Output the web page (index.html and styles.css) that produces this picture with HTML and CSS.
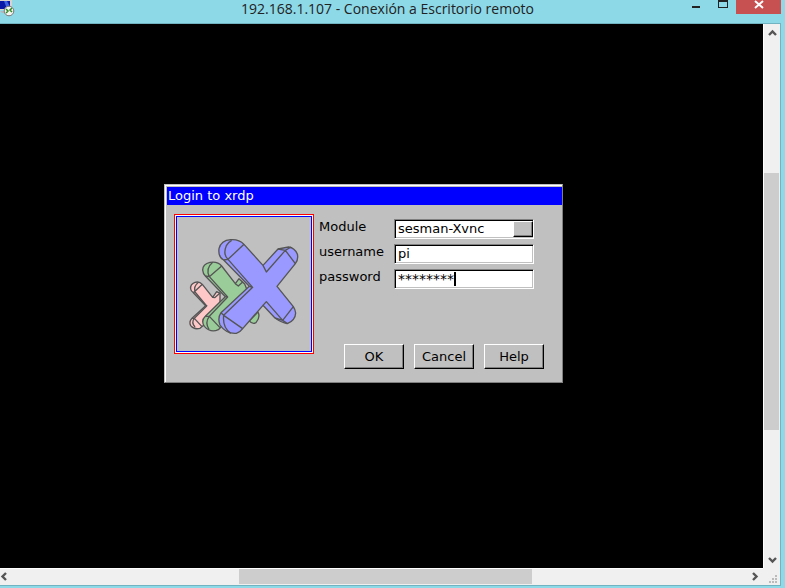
FILE: index.html
```
<!DOCTYPE html>
<html lang="es">
<head>
<meta charset="utf-8">
<title>192.168.1.107 - Conexión a Escritorio remoto</title>
<link rel="stylesheet" href="styles.css">
</head>
<body>
<header class="titlebar">
  <svg class="app-icon" width="16" height="17" viewBox="0 0 16 17" aria-hidden="true">
    <path d="M0 0h12v10H0z" fill="#d8d4cc"/>
    <path d="M0 1h10v8H0z" fill="#0a18a8"/>
    <path d="M4 1h3l3 6V9H7z" fill="#3d63e0"/>
    <path d="M0 11h6v2H2z" fill="#b4b8bc"/>
    <circle cx="9" cy="11" r="4.800" fill="#f4f4f0" stroke="#777"/>
    <path d="M6 9l2 2-2 2M12 8l-2 2 2 2" fill="none" stroke="#2c8a22" stroke-width="1.500"/>
  </svg>
  <h1 class="caption">192.168.1.107 - Conexión a Escritorio remoto</h1>
  <div class="window-buttons">
    <button class="win-btn" type="button" aria-label="Minimizar"><svg width="27" height="14" viewBox="0 0 27 14"><path d="M10 6h8v2h-8z" fill="#222"/></svg></button>
    <button class="win-btn" type="button" aria-label="Maximizar"><svg width="27" height="14" viewBox="0 0 27 14"><path d="M9 0h10v8H9zM10 2v5h8V2z" fill="#222" fill-rule="evenodd"/></svg></button>
    <button class="win-btn win-close" type="button" aria-label="Cerrar"><svg width="45" height="14" viewBox="0 0 45 14"><path d="M19 1l8 7M27 1l-8 7" stroke="#fff" stroke-width="2"/></svg></button>
  </div>
</header>
<div class="client">
  <main class="desktop">
    <form class="dialog">
      <h2 class="dialog-title">Login to xrdp</h2>
      <div class="dialog-body">
        <div class="logo">
          <svg width="134" height="134" viewBox="21 21 402 402" role="img" aria-label="xrdp">
            <g stroke="#555" stroke-width="4" stroke-linejoin="round">
              <g fill="#ffc8c8">
                <path d="M75 217Q60 222 62 237Q63 244 70 248L107 287L66 325Q56 335 62 347Q72 360 90 355L150 305V250L140 245L128 262L97 223Q88 213 75 217z"/>
                <path d="M70 248L97 223M75 246Q70 229 84 218M75 246L110 288L73 325L96 350M107 287h5M73 325Q63 337 75 351M66 325h7M128 262L134 263L151 248" fill="none"/>
              </g>
              <g fill="#99cc99">
                <path d="M120 157Q98 162 98 180Q99 192 106 198L166 260L106 319Q92 332 103 349Q122 370 145 359L240 262L224 222L207 206L196 221L155 168Q143 153 120 157zM237 332Q247 344 258 338Q272 321 264 306L240 330z"/>
                <path d="M106 198L118 200L155 168M118 200Q106 176 128 157M118 200L173 261L118 319L150 353M166 260h7M118 319Q104 337 117 358M106 319h12M196 221L205 228L218 216" fill="none"/>
              </g>
              <g fill="#9999ff">
                <path d="M182 89Q153 91 147 116Q144 141 161 150L238 229L153 308Q142 324 150 345Q168 372 199 370Q211 366 218 356L279 286L315 324Q335 338 352 341Q376 331 377 309Q376 299 370 290L321 229L376 161Q386 149 382 132Q374 114 356 111L324 117L279 166L222 103Q207 87 182 89z"/>
                <path d="M161 150L174 148L222 103M174 148Q158 133 169 107Q174 97 185 91M174 148L248 232L161 316L218 356M238 229L248 232M153 308L161 316M161 316Q157 353 182 370M279 166L289 186L346 121L376 161M324 117L346 121L363 111M279 286L289 275L338 331L370 290M315 324L338 331L352 341" fill="none"/>
              </g>
            </g>
          </svg>
        </div>
        <div class="panel">
          <div class="fields">
            <label for="module">Module</label>
            <div class="field combo">
              <select id="module"><option>sesman-Xvnc</option></select>
            </div>
            <label for="username">username</label>
            <div class="field"><input id="username" type="text" value="pi"></div>
            <label for="password">password</label>
            <div class="field focused"><input id="password" type="text" value="********" autocomplete="off"></div>
          </div>
          <div class="actions">
            <button class="btn" type="button">OK</button>
            <button class="btn" type="button">Cancel</button>
            <button class="btn" type="button">Help</button>
          </div>
        </div>
      </div>
    </form>
  </main>
  <div class="scroll scroll-v">
    <button class="arrow" type="button" aria-label="Arriba"><svg width="16" height="17" viewBox="0 0 16 17"><path d="M5 11l3.500-3.500L12 11" fill="none" stroke="#555" stroke-width="2.400"/></svg></button>
    <div class="track"><span class="before"></span><span class="thumb"></span><span class="after"></span></div>
    <button class="arrow" type="button" aria-label="Abajo"><svg width="16" height="17" viewBox="0 0 16 17"><path d="M5 7l3.500 3.500L12 7" fill="none" stroke="#555" stroke-width="2.400"/></svg></button>
  </div>
  <div class="scroll scroll-h">
    <button class="arrow" type="button" aria-label="Izquierda"><svg width="17" height="16" viewBox="0 0 17 16"><path d="M6 4L2.500 7.500L6 11" fill="none" stroke="#555" stroke-width="2.400"/></svg></button>
    <div class="track"><span class="before"></span><span class="thumb"></span><span class="after"></span></div>
    <button class="arrow" type="button" aria-label="Derecha"><svg width="17" height="16" viewBox="0 0 17 16"><path d="M7 4l3.500 3.500L7 11" fill="none" stroke="#555" stroke-width="2.400"/></svg></button>
  </div>
  <svg class="grip" width="17" height="17" viewBox="0 0 17 17" aria-hidden="true"><path d="M12 7h2v2h-2zM9 10h2v2H9zM12 10h2v2h-2zM6 13h2v2H6zM9 13h2v2H9zM12 13h2v2h-2z" fill="#bbb"/></svg>
</div>
</body>
</html>
```
FILE: styles.css
```
* { box-sizing: border-box; }

body {
  margin: 0;
  height: 100vh;
  display: flex;
  flex-direction: column;
  overflow: hidden;
  background: #8dd9e8;
  font-family: "DejaVu Sans", Verdana, sans-serif;
  font-size: 13px;
  color: #000;
}

h1, h2 { margin: 0; font-weight: normal; }
button { margin: 0; padding: 0; border: 0; background: none; font: inherit; color: inherit; }
svg { display: block; }

.titlebar {
  display: grid;
  grid-template-columns: 100px 1fr 100px;
  flex: none;
  height: 23px;
}

.caption {
  font-family: "Open Sans", "Noto Sans", sans-serif;
  font-size: 14px;
  line-height: 18px;
  text-align: center;
  color: #222;
  padding-right: 10px;
  white-space: nowrap;
}

.window-buttons { display: flex; justify-content: flex-end; align-items: flex-start; padding-right: 4px; }
.win-close { background: #c75050; }

.client {
  flex: 1;
  display: grid;
  grid-template: 1fr 17px / 1fr 17px;
  margin: 0 4px 2px 0;
  border: 1px solid #72b3c1;
  border-left: 0;
  background: #f0f0f0;
}

.desktop {
  display: grid;
  place-items: center;
  padding: 0 36px 26px 0;
  background: #000;
}

.scroll { display: flex; background: #f0f0f0; }
.scroll-v { flex-direction: column; border-left: 1px solid #fff; }
.scroll-h { border-top: 1px solid #fff; }
.track { flex: 1; display: flex; flex-direction: inherit; }
.thumb { background: #cdcdcd; }
.scroll-v .before { flex: 132; }
.scroll-v .thumb { flex: 257; margin-right: 1px; }
.scroll-v .after { flex: 121; }
.scroll-h .before { flex: 222; }
.scroll-h .thumb { flex: 293; margin-bottom: 1px; }
.scroll-h .after { flex: 214; }

.dialog {
  width: 399px;
  border: 1px solid;
  border-color: #c0c0c0 #808080 #808080 #c0c0c0;
  background: #c0c0c0;
  box-shadow: inset 1px 1px #fff;
  padding: 2px 0 0 2px;
}

.dialog-title {
  background: #00f;
  color: #fff;
  font-size: 13px;
  line-height: 18px;
  padding-left: 1px;
}

.dialog-body { display: flex; gap: 5px; padding: 9px 18px 13px 7px; }

.logo {
  align-self: flex-start;
  border: 1px solid #f00;
  padding: 1px;
  background: #fff;
}
.logo svg { box-sizing: content-box; border: 1px solid #00f; background: #c0c0c0; }

.panel { flex: 1; display: flex; flex-direction: column; justify-content: space-between; min-height: 155px; }

.fields {
  display: grid;
  grid-template-columns: 75px 140px;
  row-gap: 5px;
  padding-top: 5px;
}
.fields label { line-height: 16px; }

.field {
  position: relative;
  height: 20px;
  border: 1px solid;
  border-color: #808080 #fff #fff #808080;
  background: #fff;
  box-shadow: inset 1px 1px #000, inset -1px -1px #c0c0c0;
}
.field input, .field select {
  display: block;
  width: 100%;
  height: 18px;
  padding: 0 3px;
  border: 0;
  background: none;
  font: inherit;
  color: inherit;
  appearance: none;
  outline: 0;
}
.field #password { font-size: 14px; }

/* drop-down handle */
.combo::after {
  content: "";
  position: absolute;
  top: 1px;
  right: 0;
  bottom: 1px;
  width: 18px;
  border: 1px solid;
  border-color: #fff #000 #000 #fff;
  box-shadow: inset -1px -1px #808080;
  background: #c0c0c0;
  pointer-events: none;
}

/* text cursor of the active field */
.focused::after {
  content: "";
  position: absolute;
  left: 59px;
  top: 2px;
  width: 2px;
  height: 14px;
  background: #000;
}

.actions { display: flex; justify-content: flex-end; gap: 10px; }
.btn {
  width: 60px;
  height: 25px;
  border: 1px solid;
  border-color: #fff #000 #000 #fff;
  box-shadow: inset -1px -1px #808080;
}
```
